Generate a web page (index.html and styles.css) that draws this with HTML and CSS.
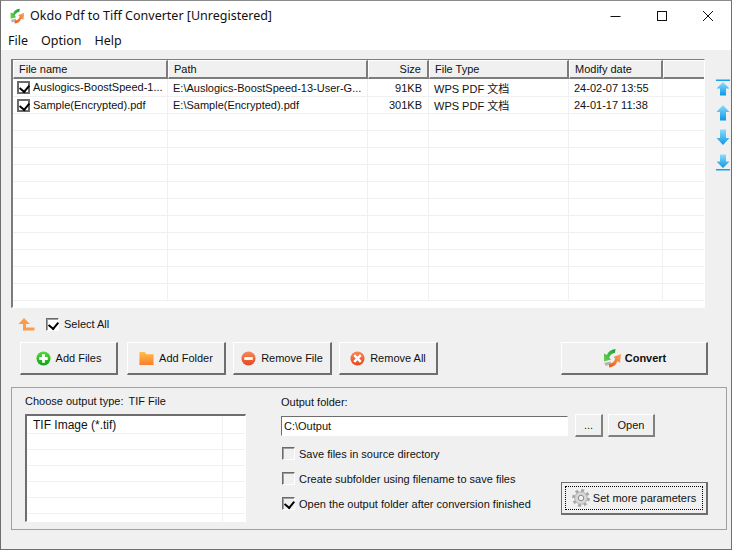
FILE: index.html
```html
<!DOCTYPE html>
<html>
    <head>
        <title>Okdo Pdf to Tiff Converter [Unregistered]</title>
        <link rel="stylesheet" href="styles.css">
    </head>
    <body>
        <svg class="defs" width="0" height="0">
            <defs>
                <linearGradient id="blue" x1="0" y1="0" x2="0" y2="1">
                    <stop offset="0" stop-color="#8fdcfb"/>
                    <stop offset="1" stop-color="#0a98e6"/>
                </linearGradient>
                <linearGradient id="green" x1="0" y1="0" x2="0" y2="1">
                    <stop offset="0" stop-color="#56d83e"/>
                    <stop offset="1" stop-color="#10a019"/>
                </linearGradient>
                <linearGradient id="red" x1="0" y1="0" x2="0" y2="1">
                    <stop offset="0" stop-color="#f8885a"/>
                    <stop offset="1" stop-color="#e2481f"/>
                </linearGradient>
                <linearGradient id="folder" x1="0" y1="0" x2="0" y2="1">
                    <stop offset="0" stop-color="#fdc04a"/>
                    <stop offset="1" stop-color="#fb7c2c"/>
                </linearGradient>
                <linearGradient id="logo-green" x1="1" y1="0" x2="0" y2="1">
                    <stop offset="0" stop-color="#12a23c"/>
                    <stop offset="1" stop-color="#6fd24a"/>
                </linearGradient>
                <linearGradient id="logo-orange" x1="1" y1="0" x2="0" y2="1">
                    <stop offset="0" stop-color="#f9a45c"/>
                    <stop offset="1" stop-color="#ee5a14"/>
                </linearGradient>
                <symbol id="logo" viewBox="0 0 20 20">
                    <path d="M2 15 L8.500 13.500 L9 16 L4 18 Z" fill="#b4b4b4"/>
                    <path d="M13.500 1 Q6.500 2 5 7 L2 5.500 L2 13.500 L9 11.500 L7.200 9.800 Q8.500 5.800 13 4.800 Z" fill="url(#logo-green)"/>
                    <path d="M7 19.500 Q14 18.500 15.300 13.300 L18 14.800 L19 6 L11.500 9 L13.300 10.500 Q12 15 7 16 Z" fill="url(#logo-orange)"/>
                </symbol>
            </defs>
        </svg>

        <div class="window">
            <div class="titlebar">
                <svg class="titlebar-logo"><use href="#logo"/></svg>
                <div class="titlebar-text">Okdo Pdf to Tiff Converter [Unregistered]</div>
                <div class="caption">
                    <svg class="caption-btn" viewBox="0 0 46 30"><path d="M17.500 15.500 H27.500" stroke="#111" fill="none"/></svg>
                    <svg class="caption-btn" viewBox="0 0 46 30"><rect x="18.500" y="10.500" width="9" height="9" stroke="#111" fill="none"/></svg>
                    <svg class="caption-btn" viewBox="0 0 46 30"><path d="M18 10 L28 20 M28 10 L18 20" stroke="#111" fill="none"/></svg>
                </div>
            </div>

            <div class="menubar">
                <span class="menu-item">File</span>
                <span class="menu-item">Option</span>
                <span class="menu-item">Help</span>
            </div>

            <main>
                <div class="files">
                    <div class="grid">
                        <table>
                            <colgroup>
                                <col class="col-name"><col class="col-path"><col class="col-size"><col class="col-type"><col class="col-date"><col>
                            </colgroup>
                            <thead>
                                <tr>
                                    <th>File name</th>
                                    <th>Path</th>
                                    <th class="right">Size</th>
                                    <th>File Type</th>
                                    <th>Modify date</th>
                                    <th></th>
                                </tr>
                            </thead>
                            <tbody>
                                <tr>
                                    <td class="cell-name"><span class="box box-grid"></span>Auslogics-BoostSpeed-1...</td>
                                    <td>E:\Auslogics-BoostSpeed-13-User-G...</td>
                                    <td class="right">91KB</td>
                                    <td>WPS PDF 文档</td>
                                    <td>24-02-07 13:55</td>
                                    <td></td>
                                </tr>
                                <tr>
                                    <td class="cell-name"><span class="box box-grid"></span>Sample(Encrypted).pdf</td>
                                    <td>E:\Sample(Encrypted).pdf</td>
                                    <td class="right">301KB</td>
                                    <td>WPS PDF 文档</td>
                                    <td>24-01-17 11:38</td>
                                    <td></td>
                                </tr>
                                <tr><td></td><td></td><td></td><td></td><td></td><td></td></tr>
                                <tr><td></td><td></td><td></td><td></td><td></td><td></td></tr>
                                <tr><td></td><td></td><td></td><td></td><td></td><td></td></tr>
                                <tr><td></td><td></td><td></td><td></td><td></td><td></td></tr>
                                <tr><td></td><td></td><td></td><td></td><td></td><td></td></tr>
                                <tr><td></td><td></td><td></td><td></td><td></td><td></td></tr>
                                <tr><td></td><td></td><td></td><td></td><td></td><td></td></tr>
                                <tr><td></td><td></td><td></td><td></td><td></td><td></td></tr>
                                <tr><td></td><td></td><td></td><td></td><td></td><td></td></tr>
                                <tr><td></td><td></td><td></td><td></td><td></td><td></td></tr>
                                <tr><td></td><td></td><td></td><td></td><td></td><td></td></tr>
                            </tbody>
                        </table>
                    </div>

                    <div class="order">
                        <svg class="order-btn" viewBox="0 0 14 17"><path d="M0 0.500 H14 V2 H0 Z" fill="#1c9fe8"/><path d="M7 3 L13.500 9.500 H10 V16.500 H4 V9.500 H0.500 Z" fill="url(#blue)"/></svg>
                        <svg class="order-btn" viewBox="0 0 14 17"><path d="M7 1 L13.500 8 H10 V16.500 H4 V8 H0.500 Z" fill="url(#blue)"/></svg>
                        <svg class="order-btn" viewBox="0 0 14 17"><path d="M4 0.500 H10 V9 H13.500 L7 16 L0.500 9 H4 Z" fill="url(#blue)"/></svg>
                        <svg class="order-btn" viewBox="0 0 14 17"><path d="M4 0.500 H10 V7.500 H13.500 L7 14 L0.500 7.500 H4 Z" fill="url(#blue)"/><path d="M0 15 H14 V16.500 H0 Z" fill="#1c9fe8"/></svg>
                    </div>
                </div>

                <div class="select-row">
                    <svg class="up-icon" viewBox="0 0 17 13"><path d="M6 0 L12 6 H8 V9.500 H16.500 V12.500 H5 V6 H0.500 Z" fill="#fb9c4b"/></svg>
                    <span class="box box-light box-on"></span>
                    <span>Select All</span>
                </div>

                <div class="actions">
                    <div class="btn btn-add">
                        <svg class="icon" viewBox="0 0 16 16"><circle cx="8" cy="8" r="7.500" fill="url(#green)"/><path d="M6.500 3.500 H9.500 V6.500 H12.500 V9.500 H9.500 V12.500 H6.500 V9.500 H3.500 V6.500 H6.500 Z" fill="#fff"/></svg>
                        Add Files
                    </div>
                    <div class="btn btn-folder">
                        <svg class="icon" viewBox="0 0 16 16"><path d="M0.500 1 H6 L8 3.500 H15.500 V15 H0.500 Z" fill="url(#folder)"/></svg>
                        Add Folder
                    </div>
                    <div class="btn btn-file">
                        <svg class="icon" viewBox="0 0 16 16"><circle cx="8" cy="8" r="7.500" fill="url(#red)"/><rect x="3.500" y="6.500" width="9" height="3" fill="#fff"/></svg>
                        Remove File
                    </div>
                    <div class="btn btn-all">
                        <svg class="icon" viewBox="0 0 16 16"><circle cx="8" cy="8" r="7.500" fill="url(#red)"/><path d="M4.500 4.500 L11.500 11.500 M11.500 4.500 L4.500 11.500" stroke="#fff" stroke-width="2.600"/></svg>
                        Remove All
                    </div>
                    <div class="btn btn-convert">
                        <svg class="icon icon-convert"><use href="#logo"/></svg>
                        Convert
                    </div>
                </div>

                <section class="panel">
                    <div class="type">
                        <div class="type-label"><span>Choose output type:</span><span>TIF File</span></div>
                        <div class="type-list">
                            <div class="type-row">TIF Image (*.tif)</div>
                            <div class="type-row"></div>
                            <div class="type-row"></div>
                            <div class="type-row"></div>
                            <div class="type-row"></div>
                            <div class="type-row"></div>
                            <div class="type-row"></div>
                        </div>
                    </div>

                    <div class="output">
                        <div class="output-label">Output folder:</div>
                        <div class="output-path">
                            <div class="path-input">C:\Output</div>
                            <div class="btn btn-small btn-dots">...</div>
                            <div class="btn btn-small btn-open">Open</div>
                        </div>
                        <div class="output-bottom">
                            <div class="options">
                                <div class="option"><span class="box box-flat"></span>Save files in source directory</div>
                                <div class="option"><span class="box box-flat"></span>Create subfolder using filename to save files</div>
                                <div class="option"><span class="box box-flat box-on"></span>Open the output folder after conversion finished</div>
                            </div>
                            <div class="btn btn-params">
                                <div class="btn-focus">
                                    <svg class="icon" viewBox="0 0 18 18">
                                        <circle cx="9" cy="9" r="7.400" fill="none" stroke="#a8a8a8" stroke-width="3" stroke-dasharray="2.900 2.900"/>
                                        <circle cx="9" cy="9" r="6.300" fill="#d6d6d6" stroke="#a0a0a0" stroke-width="0.700"/>
                                        <circle cx="9" cy="9" r="2.700" fill="#f2f2f2" stroke="#8c8c8c"/>
                                    </svg>
                                    Set more parameters
                                </div>
                            </div>
                        </div>
                    </div>
                </section>
            </main>
        </div>
    </body>
</html>
```

FILE: styles.css
```css
* {
    box-sizing: border-box; }
html, body {
    margin: 0;
    height: 100%;
    overflow: hidden; }
body {
    font-family: "Liberation Sans", "Noto Sans CJK SC", sans-serif;
    font-size: 11px;
    color: #111; }
.defs {
    display: block;
    height: 0; }

.window {
    width: 732px;
    height: 550px;
    display: flex;
    flex-direction: column;
    background: #f0f0f0;
    border: 1px solid #6e6e6e;
    border-top-color: #8a8a8a; }

.titlebar {
    height: 30px;
    display: flex;
    align-items: center;
    background: #fff; }
.titlebar-logo {
    width: 16px;
    height: 16px;
    margin: 0 5px 0 8px; }
.titlebar-text {
    font-family: "Noto Sans", sans-serif;
    font-size: 12.5px;
    margin-top: -2px;
    flex-grow: 1; }
.caption {
    display: flex; }
.caption-btn {
    width: 46px;
    height: 30px;
    display: block; }

.menubar {
    height: 19px;
    display: flex;
    align-items: center;
    gap: 13px;
    padding-left: 7px;
    background: #fff;
    font-family: "Noto Sans", sans-serif;
    font-size: 12.5px; }

main {
    flex-grow: 1;
    padding: 9px 0 0 10px; }

.files {
    display: flex; }
.grid {
    flex: none;
    width: 694px;
    height: 249px;
    overflow: hidden;
    background: #fff;
    border: 1px solid;
    border-color: #7c7c7c #fff #fff #7c7c7c;
    border-left-width: 2px; }
table {
    width: 100%;
    table-layout: fixed;
    border-collapse: separate;
    border-spacing: 0; }
.col-name { width: 155px; }
.col-path { width: 200px; }
.col-size { width: 61px; }
.col-type { width: 140px; }
.col-date { width: 94px; }
th {
    height: 19px;
    padding: 0 0 0 5px;
    font-weight: normal;
    text-align: left;
    background: #f0f0f0;
    border: 1px solid;
    border-color: #fff #7c7c7c #7c7c7c #fff;
    border-width: 1px 2px 2px 1px; }
th:last-child {
    border-right: 0; }
th.right, td.right {
    text-align: right;
    padding-right: 6px; }
td {
    height: 17px;
    padding: 0 0 0 5px;
    border-right: 1px solid #f0f0f0;
    border-bottom: 1px solid #f0f0f0;
    white-space: nowrap;
    overflow: hidden; }
td:last-child {
    border-right: 0; }
tbody tr:first-child td {
    height: 18px; }
td.cell-name {
    padding-left: 4px; }

.box {
    display: inline-block;
    flex: none;
    position: relative;
    width: 13px;
    height: 13px;
    background: #fff; }
.box-grid {
    margin-right: 3px;
    vertical-align: -3px;
    border: 2px solid #6a6a6a; }
.box-light, .box-flat {
    border: 1px solid;
    border-color: #6a6a6a #fff #fff #6a6a6a;
    box-shadow: inset 1px 1px 0 #a0a0a0; }
.box-flat {
    background: #f0f0f0; }
.box-grid::after, .box-on::after {
    content: "";
    position: absolute;
    left: 3px;
    top: 1px;
    width: 5px;
    height: 7px;
    border: solid #000;
    border-width: 0 2px 2px 0;
    transform: rotate(40deg); }
.box-grid::after {
    left: 2px;
    top: 0; }

.order {
    flex: none;
    display: flex;
    flex-direction: column;
    gap: 8px;
    padding: 20px 0 0 11px; }
.order-btn {
    width: 14px;
    height: 17px;
    display: block; }

.select-row {
    height: 22px;
    margin-top: 5px;
    padding-left: 7px;
    display: flex;
    align-items: center; }
.up-icon {
    width: 17px;
    height: 13px;
    margin-right: 11px; }
.select-row .box {
    margin-right: 5px; }

.actions {
    display: flex;
    margin-top: 7px;
    padding-left: 9px; }
.btn {
    display: flex;
    align-items: center;
    justify-content: center;
    background: #f0f0f0;
    border: 1px solid;
    border-color: #fff #6e6e6e #6e6e6e #fff;
    border-width: 1px 2px 2px 1px; }
.actions .btn {
    height: 33px; }
.icon {
    width: 15px;
    height: 15px;
    margin-right: 5px; }
.btn-add { width: 98px; margin-right: 9px; }
.btn-folder { width: 99px; margin-right: 7px; }
.btn-file { width: 99px; margin-right: 7px; }
.btn-all { width: 99px; margin-right: 123px; }
.btn-convert {
    width: 147px;
    font-weight: bold; }
.icon-convert {
    width: 20px;
    height: 20px;
    margin-right: 3px; }

.panel {
    width: 716px;
    height: 143px;
    margin-top: 12px;
    padding: 4px 0 0 13px;
    display: flex;
    border: 1px solid #a0a0a0; }
.type {
    width: 256px; }
.type-label {
    height: 18px;
    margin-bottom: 4px;
    display: flex;
    gap: 5px;
    align-items: center; }
.type-list {
    width: 221px;
    height: 108px;
    overflow: hidden;
    background: #fff;
    border: 1px solid;
    border-color: #6e6e6e #fff #fff #6e6e6e;
    border-width: 2px 1px 1px 2px; }
.type-row {
    height: 16px;
    padding-left: 6px;
    font-size: 12px;
    line-height: 18px;
    border-bottom: 1px solid #f0f0f0;
    background: linear-gradient(#f0f0f0, #f0f0f0) 195px 0 / 1px 100% no-repeat; }
.type-row:first-child {
    height: 18px; }
.type-row:last-child {
    border-bottom: 0;
    height: 9px; }

.output {
    width: 427px; }
.output-label {
    height: 20px;
    margin-bottom: 2px;
    display: flex;
    align-items: center; }
.output-path {
    display: flex;
    align-items: flex-start; }
.path-input {
    width: 287px;
    height: 20px;
    padding-left: 2px;
    line-height: 19px;
    background: #fff;
    border: 1px solid;
    border-color: #6e6e6e #fff #fff #6e6e6e;
    margin-top: 2px; }
.btn-small {
    height: 23px;
    border-color: #fff #808080 #808080 #fff; }
.btn-dots {
    width: 28px;
    margin-left: 7px; }
.btn-open {
    width: 47px;
    margin-left: 5px; }

.output-bottom {
    display: flex;
    justify-content: space-between;
    align-items: flex-end; }
.options {
    display: flex;
    flex-direction: column;
    gap: 12px;
    padding-top: 10px; }
.option {
    height: 13px;
    display: flex;
    align-items: center;
    white-space: nowrap; }
.option .box {
    margin: 0 4px 0 1px; }
.btn-params {
    width: 147px;
    height: 33px;
    padding: 3px;
    margin-bottom: -5px;
    border: 1px solid #6e6e6e;
    border-width: 1px 2px 2px 1px; }
.btn-focus {
    width: 100%;
    height: 100%;
    display: flex;
    align-items: center;
    justify-content: center;
    border: 1px dotted #000; }
.btn-focus .icon {
    width: 18px;
    height: 18px;
    margin-right: 3px; }
```
